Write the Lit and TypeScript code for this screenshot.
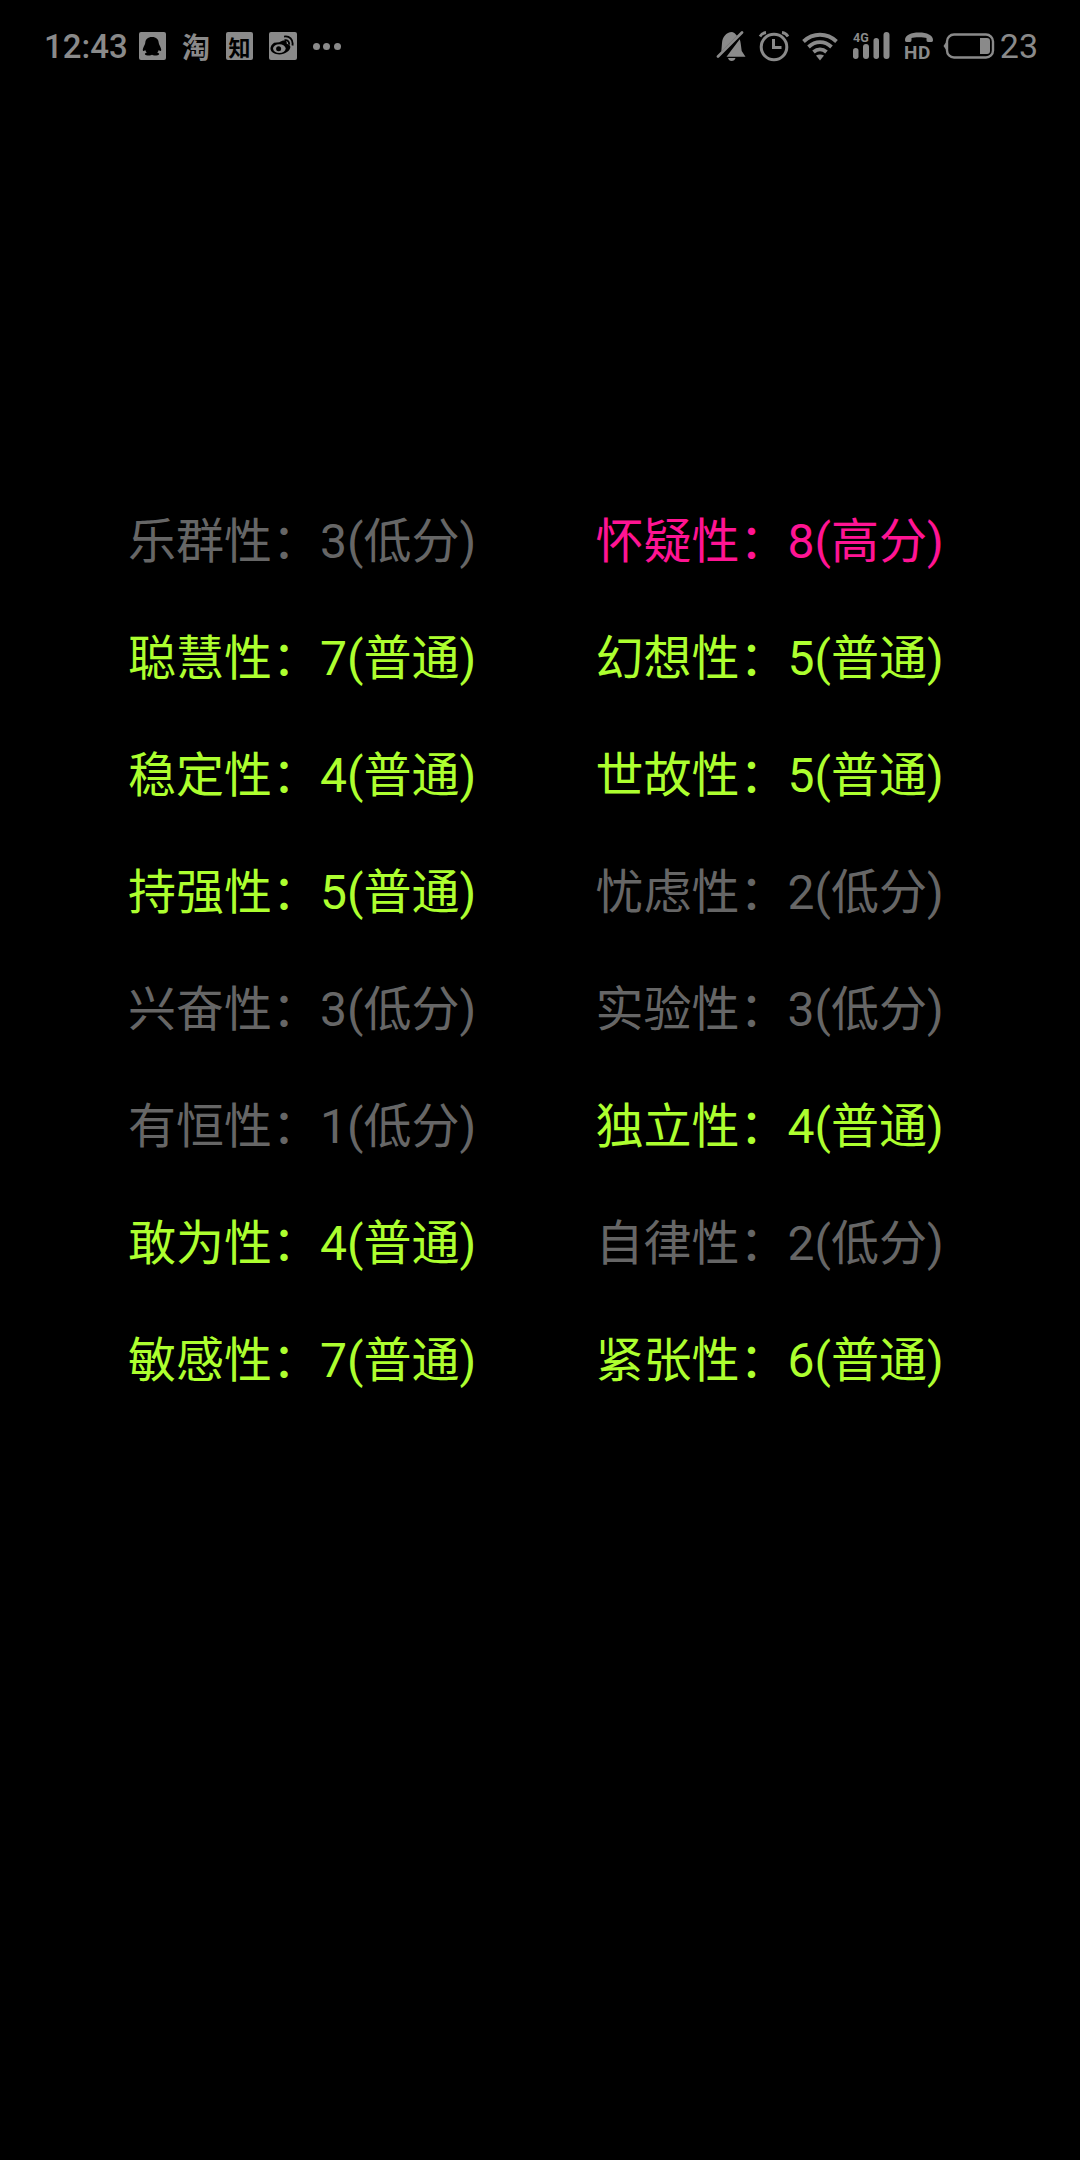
import { LitElement, html, css, svg } from "lit";
import { customElement } from "lit/decorators.js";

type Item = [string, string, string, string];
const L = "低分", N = "普通", H = "高分";
const rows: Item[] = [
  ["乐群性", "3", L, "low"], ["怀疑性", "8", H, "high"],
  ["聪慧性", "7", N, "mid"], ["幻想性", "5", N, "mid"],
  ["稳定性", "4", N, "mid"], ["世故性", "5", N, "mid"],
  ["持强性", "5", N, "mid"], ["忧虑性", "2", L, "low"],
  ["兴奋性", "3", L, "low"], ["实验性", "3", L, "low"],
  ["有恒性", "1", L, "low"], ["独立性", "4", N, "mid"],
  ["敢为性", "4", N, "mid"], ["自律性", "2", L, "low"],
  ["敏感性", "7", N, "mid"], ["紧张性", "6", N, "mid"],
];

const bell = svg`<svg width="30" height="30" viewBox="0 0 30 30"><path fill="#8a8a8a" d="M16 1C10 1.500 6.500 6 6 12L5.300 20.500 21 4.800C19.500 2.800 18 1.500 16 1zM23.700 8.300 10.500 25.700H29.500L25.700 20 24.700 12.500C24.500 11 24.200 9.500 23.700 8.300zM12 27H19.500C19 29 17.500 30 15.700 30S12.500 29 12 27z"/><path stroke="#8a8a8a" stroke-width="2.700" stroke-linecap="round" d="M2 25.500 26 1.500"/></svg>`;
const alarm = svg`<svg width="32" height="32" viewBox="0 0 32 32" fill="none" stroke="#8a8a8a"><circle cx="16" cy="17" r="12.800" stroke-width="3"/><path stroke-width="3" d="M15.500 9V17.500H23.500"/><path stroke-width="2.800" d="M2 6.500C3.500 4 5.500 2.800 8 2.500M30 6.500C28.500 4 26.500 2.800 24 2.500"/></svg>`;
const wifi = svg`<svg width="36" height="30" viewBox="0 0 36 30" fill="none" stroke="#8a8a8a" stroke-width="3.800"><path d="M1.500 10.500C11 1.500 25 1.500 34.500 10.500"/><path d="M6.500 16C13.500 9.500 22.500 9.500 29.500 16"/><path d="M11.500 21C15.500 17.500 20.500 17.500 24.500 21"/><path fill="#8a8a8a" stroke="none" d="M14 24.500C16.500 23 19.500 23 22 24.500L18 29.500z"/></svg>`;
const signal = svg`<svg class="ml2" width="38" height="30" viewBox="0 0 38 30"><g fill="#8a8a8a"><rect x="1" y="17" width="5.500" height="11" rx="2.750"/><rect x="11" y="13" width="6" height="15" rx="3"/><rect x="21.500" y="7" width="5.500" height="21" rx="2.750"/><rect x="31.500" y="1" width="6" height="27" rx="3"/></g><text x="1" y="11" class="tiny">4G</text></svg>`;
const hd = svg`<svg class="hdi" width="32" height="36" viewBox="0 0 32 36"><path fill="#8a8a8a" d="M1 9C1 4 7 1.500 15 1.500S29 4 29 9c0 1-.5 2-1.500 2H24c-1 0-1.500-1-1.500-2V7C20 6 10 6 7.500 7V9c0 1-.5 2-1.500 2H2.500C1.500 11 1 10 1 9z"/><text x="0" y="27.500" class="hd">HD</text></svg>`;
const battery = svg`<svg class="bat" width="52" height="26" viewBox="0 0 52 26" fill="none"><path fill="#8a8a8a" d="M.5 13 3.500 8.500V17.500z"/><rect x="4" y="1.500" width="46" height="23" rx="7" stroke="#8a8a8a" stroke-width="2.400"/><path fill="#8a8a8a" d="M37 5h7c2 0 3 1 3 3v10c0 2-1 3-3 3h-7z"/></svg>`;
const qq = svg`<svg width="20" height="19" viewBox="0 0 16 20" preserveAspectRatio="none"><path fill="#000" d="M8 0c3.500 0 5.200 2.800 5.400 6.200.1 1.500 2 5 2 7.300 0 1.500-.8 1.700-2 .3-.2 1.200-.7 1.900-1.300 2.500 1 .4 1.600.9 1.600 1.500 0 1-1.700 1.700-3.700 1.700-.9 0-1.600-.3-2-.8-.4.500-1.100.8-2 .8-2 0-3.700-.7-3.700-1.700 0-.6.600-1.100 1.600-1.500-.6-.6-1.100-1.300-1.300-2.500-1.200 1.400-2 1.200-2-.3 0-2.300 1.900-5.800 2-7.300C2.800 2.800 4.500 0 8 0z"/></svg>`;
const weibo = svg`<svg width="25" height="22" viewBox="0 0 23 21" fill="none"><path fill="#000" d="M8.500 7C12 4.500 15 5 15.500 7c.2 1-.3 1.500.5 1.500 2 .5 3 1.500 3 3 0 3.500-5 7-10.500 7C4 18.500 0 16.500 0 13c0-2 1.500-4.200 3.500-5.500z"/><ellipse cx="8.500" cy="13" rx="6" ry="4.200" fill="#8a8a8a"/><circle cx="7.800" cy="13.200" r="2.400" fill="#000"/><path stroke="#000" stroke-width="1.800" d="M13 1.500c5-1 9 3 8 8.500M13.500 5c2.500-.6 4.800 1.500 4.200 4.200"/></svg>`;

@customElement("app-root")
export class AppRoot extends LitElement {
  static styles = css`
    :host { display: block; width: 1080px; height: 2160px; background: #000; overflow: hidden;
      font-family: Roboto, "Noto Sans CJK SC", sans-serif; }
    .status { height: 92px; box-sizing: border-box; padding: 0 42px 0 44px; display: flex; align-items: center;
      justify-content: space-between; color: #8a8a8a; }
    .side { display: flex; align-items: center; }
    .time, .level { font-size: 33px; font-weight: 500; line-height: 1; color: #8a8a8a; }
    .left { gap: 16px; }
    .right { gap: 12px; }
    .time { margin-right: -5px; }
    .box { width: 27.500px; height: 28px; border-radius: 2px; background: #8a8a8a; display: flex;
      align-items: center; justify-content: center; color: #000; font-size: 22px; font-weight: 700;
      line-height: 1; font-family: "Noto Sans CJK SC", sans-serif; }
    .plain { background: none; color: #8a8a8a; font-size: 28px; }
    .dots { display: flex; gap: 3.500px; }
    .dots i { width: 7px; height: 7px; border-radius: 50%; background: #8a8a8a; }
    .icons { display: flex; align-items: center; gap: 12px; height: 36px; }
    .icons svg { display: block; }
    .icons .ml2 { margin-left: 2px; }
    .icons .hdi { margin-left: 2px; margin-right: -2px; margin-top: 6px; }
    .icons .bat { margin-left: -3px; }
    .tiny { font: 700 12.500px Roboto, sans-serif; fill: #8a8a8a; }
    .hd { font: 700 19px Roboto, sans-serif; fill: #8a8a8a; letter-spacing: 0.500px; }
    .level { margin-left: -7px; font-weight: 400; font-size: 34px; }
    .grid { display: grid; grid-template-columns: 467.500px auto; grid-auto-rows: 117px; justify-content: start;
      padding: 390.500px 0 0 128px; font-size: 48px; white-space: nowrap; }
    .cell { line-height: 117px; }
    .low { color: #666666; }
    .mid { color: #adff2f; }
    .high { color: #ff1493; }
  `;

  render() {
    return html`
      <div class="status">
        <div class="side left">
          <span class="time">12:43</span>
          <span class="box">${qq}</span>
          <span class="box plain">淘</span>
          <span class="box">知</span>
          <span class="box">${weibo}</span>
          <span class="dots"><i></i><i></i><i></i></span>
        </div>
        <div class="side right">
          <div class="icons">${bell}${alarm}${wifi}${signal}${hd}${battery}</div>
          <span class="level">23</span>
        </div>
      </div>
      <div class="grid">
        ${rows.map(([n, v, t, c]) => html`<div class="cell ${c}">${n}：${v}(${t})</div>`)}
      </div>
    `;
  }
}
